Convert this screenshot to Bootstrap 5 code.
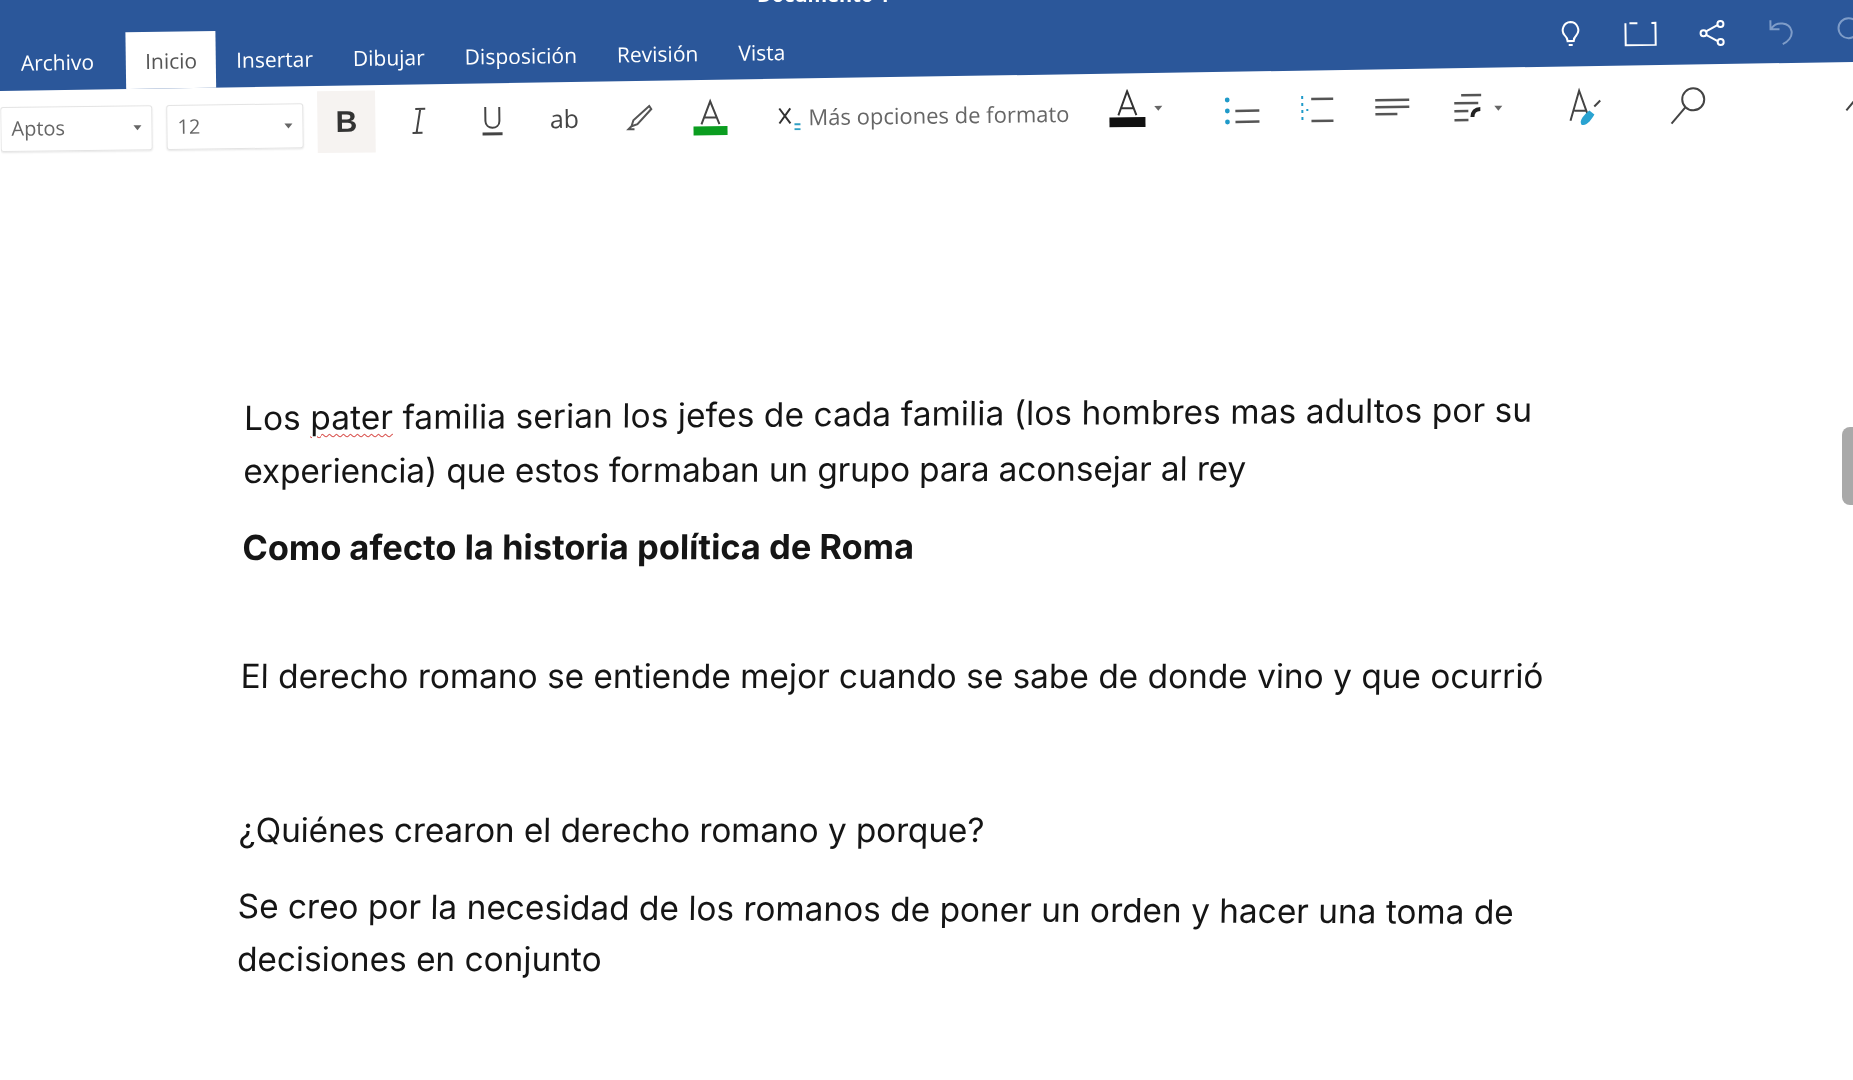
<!doctype html>
<html lang="es">
<head>
<meta charset="utf-8">
<title>Documento</title>
<link href="https://cdn.jsdelivr.net/npm/bootstrap@5.3.0/dist/css/bootstrap.min.css" rel="stylesheet">
<style>
html,body{height:100%;overflow:hidden;background:#fff}
body{font-family:"Open Sans","Liberation Sans",sans-serif;filter:blur(.6px)}
.ribbon-top{background:#2b579a;height:92px;overflow:hidden;clip-path:polygon(0 0,100% 0,100% 62px,0 91px);color:#fff}
.doc-title{font-weight:700;font-size:20px;line-height:20px;margin-top:-15px;padding-left:757px;height:20px}
.tab-row{transform:rotate(-.8deg);transform-origin:0 0;height:99px;width:100%;overflow:hidden}
.tab-item{font-size:21px;color:#fff;padding:0 20px;margin-top:29px;display:flex;align-items:center;height:60px;text-decoration:none;flex-shrink:0}
.tab-item:hover{color:#fff}
.tab-item.on{background:#fff;color:#555;padding:0 19px 10px;margin-left:12px;height:70px}
.top-icons{gap:40px;margin-left:752px;margin-top:32px;height:40px;flex-shrink:0}
.tool-row{transform:rotate(-.7deg);transform-origin:0 0;height:70px;margin-top:-1px;width:100%;overflow:hidden;color:#555}
.sel-box{height:45px;border:1px solid #e4e4e4;border-radius:3px;box-shadow:0 1px 2px rgba(0,0,0,.1);font-size:20px;color:#666;padding:0 10px;margin-top:6px;display:flex;align-items:center;justify-content:space-between;flex-shrink:0}
.sel-a{width:152px}
.sel-b{width:137px;margin-left:14px}
.caret{width:0;height:0;border:4px solid transparent;border-top:5px solid #666;border-bottom:0}
.tool-btn{width:58px;height:62px;padding:0;border:0;border-radius:0;display:flex;align-items:center;justify-content:center;background:none;color:#444}
.tool-btn.active{background:#f6f3f1}
.tool-group{margin-left:14px;flex-shrink:0}
.glyph-b{font-family:"Liberation Sans",sans-serif;font-weight:700;font-size:30px;color:#333;line-height:1}
.glyph-ab{font-size:25px;color:#444}
.more-fmt{font-size:22px;color:#666;white-space:nowrap}
.fmt-wrap{gap:6px}
.m-14{margin-left:14px}.m-16{margin-left:16px}.m-37{margin-left:37px}.m-38{margin-left:38px}.m-40{margin-left:40px}.m-42{margin-left:42px}.m-62{margin-left:62px}.m-136{margin-left:136px}
.black-a{margin-bottom:8px;margin-left:39px}
.doc-body{padding:0 0 0 239px;transform:skewX(-.74deg);transform-origin:0 415px;font-family:Inter,"Liberation Sans",sans-serif;font-size:33.4px;line-height:53px;color:#151515;margin-top:231px}
.doc-body p{margin:0;white-space:nowrap;transform-origin:0 50%}
.t-a{transform:rotate(-.37deg);letter-spacing:.1px}
.t-b{transform:rotate(-.15deg);letter-spacing:-.13px}
.t-c{transform:rotate(-.1deg)}
.t-d{transform:rotate(.27deg)}
.q-line{letter-spacing:-.1px}
.title-line{font-size:34.4px}
.spell{text-decoration:underline wavy #d9534f 1px;text-underline-offset:4px}
.gap-a{margin-top:23px!important}
.gap-b{margin-top:76px!important}
.gap-c{margin-top:101px!important}
.gap-d{margin-top:23px!important}
.scroll-handle{position:absolute;right:0;top:427px;width:11px;height:78px;background:#a9a9a9;border-radius:8px 0 0 8px}
</style>
</head>
<body>
<header class="ribbon-top">
  <div class="doc-title">Documento 1</div>
  <div class="tab-row d-flex align-items-start">
    <a class="tab-item" href="#">Archivo</a>
    <a class="tab-item on" href="#">Inicio</a>
    <a class="tab-item" href="#">Insertar</a>
    <a class="tab-item" href="#">Dibujar</a>
    <a class="tab-item" href="#">Disposición</a>
    <a class="tab-item" href="#">Revisión</a>
    <a class="tab-item" href="#">Vista</a>
    <div class="top-icons d-flex align-items-center">
      <svg width="26" height="32" viewBox="0 0 26 32" fill="none" stroke="#fff" stroke-width="2"><path d="M13 3a8 8 0 0 0-6 13c2 2 3 4 3 6h6c0-2 1-4 3-6a8 8 0 0 0-6-13zM11 26h4"/></svg>
      <svg width="34" height="26" viewBox="0 0 34 26" fill="none" stroke="#fff" stroke-width="2"><path d="M2 2v22h30V2h-4M14 2H6"/></svg>
      <svg width="30" height="28" viewBox="0 0 30 28" fill="none" stroke="#fff" stroke-width="2"><circle cx="6" cy="14" r="3"/><circle cx="23" cy="5" r="3"/><circle cx="23" cy="23" r="3"/><path d="M9 12l11-6M9 16l11 6"/></svg>
      <svg width="28" height="30" viewBox="0 0 28 30" fill="none" stroke="#7e9cc8" stroke-width="2"><path d="M3 3v9h9M4 11c5-7 18-6 20 3 1 6-4 11-9 13"/></svg>
      <svg width="26" height="32" viewBox="0 0 26 32" fill="none" stroke="#7e9cc8" stroke-width="2"><circle cx="13" cy="13" r="10"/></svg>
    </div>
  </div>
</header>

<div class="tool-row d-flex align-items-center">
  <div class="sel-box sel-a"><span>Aptos</span><span class="caret"></span></div>
  <div class="sel-box sel-b"><span>12</span><span class="caret"></span></div>
  <div class="d-flex align-items-center tool-group">
    <button class="btn tool-btn active" type="button"><span class="glyph-b">B</span></button>
    <button class="btn tool-btn m-14" type="button"><svg width="24" height="30" viewBox="0 0 24 30" fill="none" stroke="#444" stroke-width="2"><path d="M9 3h10M6 27h10M14 3l-4 24"/></svg></button>
    <button class="btn tool-btn ms-3" type="button"><svg width="26" height="32" viewBox="0 0 26 32" fill="none" stroke="#444" stroke-width="2"><path d="M6 3v14c0 9 14 9 14 0V3"/><path d="M3 30h20" stroke-width="3"/></svg></button>
    <button class="btn tool-btn m-14" type="button"><span class="glyph-ab">ab</span></button>
    <button class="btn tool-btn m-16" type="button"><svg width="30" height="28" viewBox="0 0 30 28" fill="none" stroke="#555" stroke-width="2"><path d="M26 2L10 16l-2 6 6-2L28 5zM8 22l-3 3h6"/></svg></button>
    <button class="btn tool-btn m-14" type="button"><svg width="36" height="38" viewBox="0 0 36 38"><path d="M9 26L18 3l9 23M12 19h12" fill="none" stroke="#444" stroke-width="2"/><rect x="1" y="28" width="34" height="9" fill="#0b9d20"/></svg></button>
    <span class="m-37 d-flex align-items-center fmt-wrap">
      <svg width="26" height="28" viewBox="0 0 26 28" fill="none" stroke-width="2"><path d="M3 6l11 15M14 6L3 21" stroke="#333"/><path d="M18 22h6M18 27h6" stroke="#2f9fc4"/></svg>
      <span class="more-fmt">Más opciones de formato</span>
    </span>
    <span class="black-a d-flex align-items-end gap-2">
      <svg width="38" height="38" viewBox="0 0 38 38"><path d="M10 26L19 2l9 24M13 19h12" fill="none" stroke="#333" stroke-width="2"/><rect x="1" y="28" width="36" height="10" fill="#111"/></svg>
      <span class="caret mb-3"></span>
    </span>
    <svg class="m-62" width="36" height="28" viewBox="0 0 36 28"><g fill="#1f9ac9"><circle cx="3" cy="3" r="2.4"/><circle cx="3" cy="14" r="2.4"/><circle cx="3" cy="25" r="2.4"/></g><path d="M11 14h24M11 25h24" stroke="#555" stroke-width="2.5"/></svg>
    <svg class="m-40" width="36" height="30" viewBox="0 0 36 30"><path d="M2 1v28M7 14v2" stroke="#1f9ac9" stroke-width="2" stroke-dasharray="3 4" fill="none"/><path d="M11 4h22M11 26h22" stroke="#555" stroke-width="2.5"/></svg>
    <svg class="m-38" width="36" height="24" viewBox="0 0 36 24"><path d="M1 3h34M1 10h34M1 17h22" stroke="#555" stroke-width="2.5"/></svg>
    <span class="d-flex align-items-center gap-2 m-42">
      <svg width="34" height="30" viewBox="0 0 34 30" fill="none"><path d="M9 2h20M2 10h24M2 18h14M2 27h14" stroke="#555" stroke-width="2.5"/><path d="M20 24c0-5 3-8 8-8" stroke="#222" stroke-width="4"/></svg>
      <span class="caret"></span>
    </span>
    <svg class="m-62" width="42" height="40" viewBox="0 0 42 40" fill="none"><path d="M6 34L15 4l9 26M10 24h12" stroke="#444" stroke-width="2"/><path d="M17 38c-3-4 3-10 8-14l5 4c-3 5-8 12-13 10z" fill="#2aa3d1"/><path d="M30 20l6-6" stroke="#444" stroke-width="2"/></svg>
    <svg class="m-62" width="40" height="42" viewBox="0 0 40 42" fill="none" stroke="#444" stroke-width="2"><circle cx="25" cy="15" r="11"/><path d="M17 23L3 39"/></svg>
    <svg class="m-136" width="24" height="16" viewBox="0 0 24 16" fill="none" stroke="#444" stroke-width="2"><path d="M2 15L12 3l10 12"/></svg>
  </div>
</div>

<main class="doc-body">
  <p class="t-a">Los <span class="spell">pater</span> familia serian los jefes de cada familia (los hombres mas adultos por su</p>
  <p class="t-b">experiencia) que estos formaban un grupo para aconsejar al rey</p>
  <p class="gap-a fw-bold t-c title-line">Como afecto la historia política de Roma</p>
  <p class="gap-b">El derecho romano se entiende mejor cuando se sabe de donde vino y que ocurrió</p>
  <p class="gap-c q-line">¿Quiénes crearon el derecho romano y porque?</p>
  <p class="gap-d t-d">Se creo por la necesidad de los romanos de poner un orden y hacer una toma de</p>
  <p>decisiones en conjunto</p>
</main>
<div class="scroll-handle"></div>
<script src="https://cdn.jsdelivr.net/npm/bootstrap@5.3.0/dist/js/bootstrap.bundle.min.js"></script>
</body>
</html>
